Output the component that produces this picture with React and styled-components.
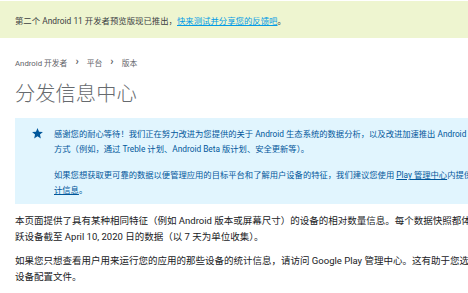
import React from "react";
import styled, { createGlobalStyle } from "styled-components";

const GlobalStyle = createGlobalStyle`
  html, body {
    margin: 0;
    padding: 0;
    background: #ffffff;
    overflow: hidden;
  }
  body {
    font-family: Roboto, "Noto Sans CJK SC", sans-serif;
    color: #202124;
  }
`;

const crumbs = ["Android 开发者", "平台", "版本"];

export default function App() {
  return (
    <>
      <GlobalStyle />
      <Page>
        <Banner>
          第二个 Android 11 开发者预览版现已推出，
          <BannerLink href="#">快来测试并分享您的反馈吧</BannerLink>。
        </Banner>
        <Main>
          <Crumbs>
            {crumbs.map((c, i) => (
              <React.Fragment key={c}>
                {i > 0 && <Chevron>›</Chevron>}
                <Crumb>{c}</Crumb>
              </React.Fragment>
            ))}
          </Crumbs>
          <Title>分发信息中心</Title>
          <Note>
            <StarIcon viewBox="0 0 24 24">
              <path d="M12 17.27L18.18 21l-1.64-7.03L22 9.24l-7.19-.61L12 2 9.19 8.63 2 9.24l5.46 4.73L5.82 21z" />
            </StarIcon>
            <NoteBody>
              <NotePara>
                感谢您的耐心等待！我们正在努力改进为您提供的关于 Android 生态系统的数据分析，以及改进加速推出 Android 设备更新的
                <br />
                方式（例如，通过 Treble 计划、Android Beta 版计划、安全更新等）。
              </NotePara>
              <NotePara>
                如果您想获取更可靠的数据以便管理应用的目标平台和了解用户设备的特征，我们建议您使用{" "}
                <NoteLink href="#">Play 管理中心</NoteLink>内提供的<NoteLink href="#">设备统
                <br />
                计信息</NoteLink>。
              </NotePara>
            </NoteBody>
          </Note>
          <Para>
            本页面提供了具有某种相同特征（例如 Android 版本或屏幕尺寸）的设备的相对数量信息。每个数据快照都体现了所有活
            <br />
            跃设备截至 April 10, 2020 日的数据（以 7 天为单位收集）。
          </Para>
          <Para>
            如果您只想查看用户用来运行您的应用的那些设备的统计信息，请访问 Google Play 管理中心。这有助于您选择要支持的
            <br />
            设备配置文件。
          </Para>
        </Main>
      </Page>
    </>
  );
}

const Page = styled.div`
  width: 468px;
  padding-top: 1px;
`;

const Banner = styled.div`
  height: 37px;
  display: flex;
  align-items: center;
  padding-left: 15px;
  background: #eef5d0;
  font-size: 8.4px;
  color: #3c4043;
  white-space: nowrap;
`;

const BannerLink = styled.a`
  color: #039be5;
  text-decoration: underline;
`;

const Main = styled.div`
  padding-left: 15px;
  padding-top: 17px;
`;

const Crumbs = styled.div`
  display: flex;
  align-items: center;
  gap: 8px;
  height: 14px;
  font-size: 7.8px;
  color: #5f6368;
`;

const Crumb = styled.span``;

const Chevron = styled.span`
  font-size: 11px;
  font-weight: 700;
  line-height: 1;
  color: #5f6368;
  margin-top: -2px;
`;

const Title = styled.h1`
  margin: 12px 0 0;
  font-size: 20.3px;
  line-height: 26px;
  font-weight: 300;
  color: #666a6e;
`;

const Note = styled.div`
  margin-top: 11px;
  width: 700px;
  height: 86px;
  box-sizing: border-box;
  background: #e1f5fe;
  display: flex;
  padding: 9px 0 0 16px;
  gap: 10px;
`;

const StarIcon = styled.svg`
  width: 13px;
  height: 13px;
  fill: #01579b;
  flex-shrink: 0;
`;

const NoteBody = styled.div`
  display: flex;
  flex-direction: column;
  gap: 11px;
`;

const NotePara = styled.p`
  margin: 0;
  font-size: 8.3px;
  line-height: 15px;
  color: #01579b;
  white-space: nowrap;
`;

const NoteLink = styled.a`
  color: #01579b;
  text-decoration: underline;
`;

const Para = styled.p`
  margin: 9px 0 0;
  font-size: 9.5px;
  line-height: 16px;
  color: #202124;
  white-space: nowrap;
  & + & {
    margin-top: 8px;
  }
`;
